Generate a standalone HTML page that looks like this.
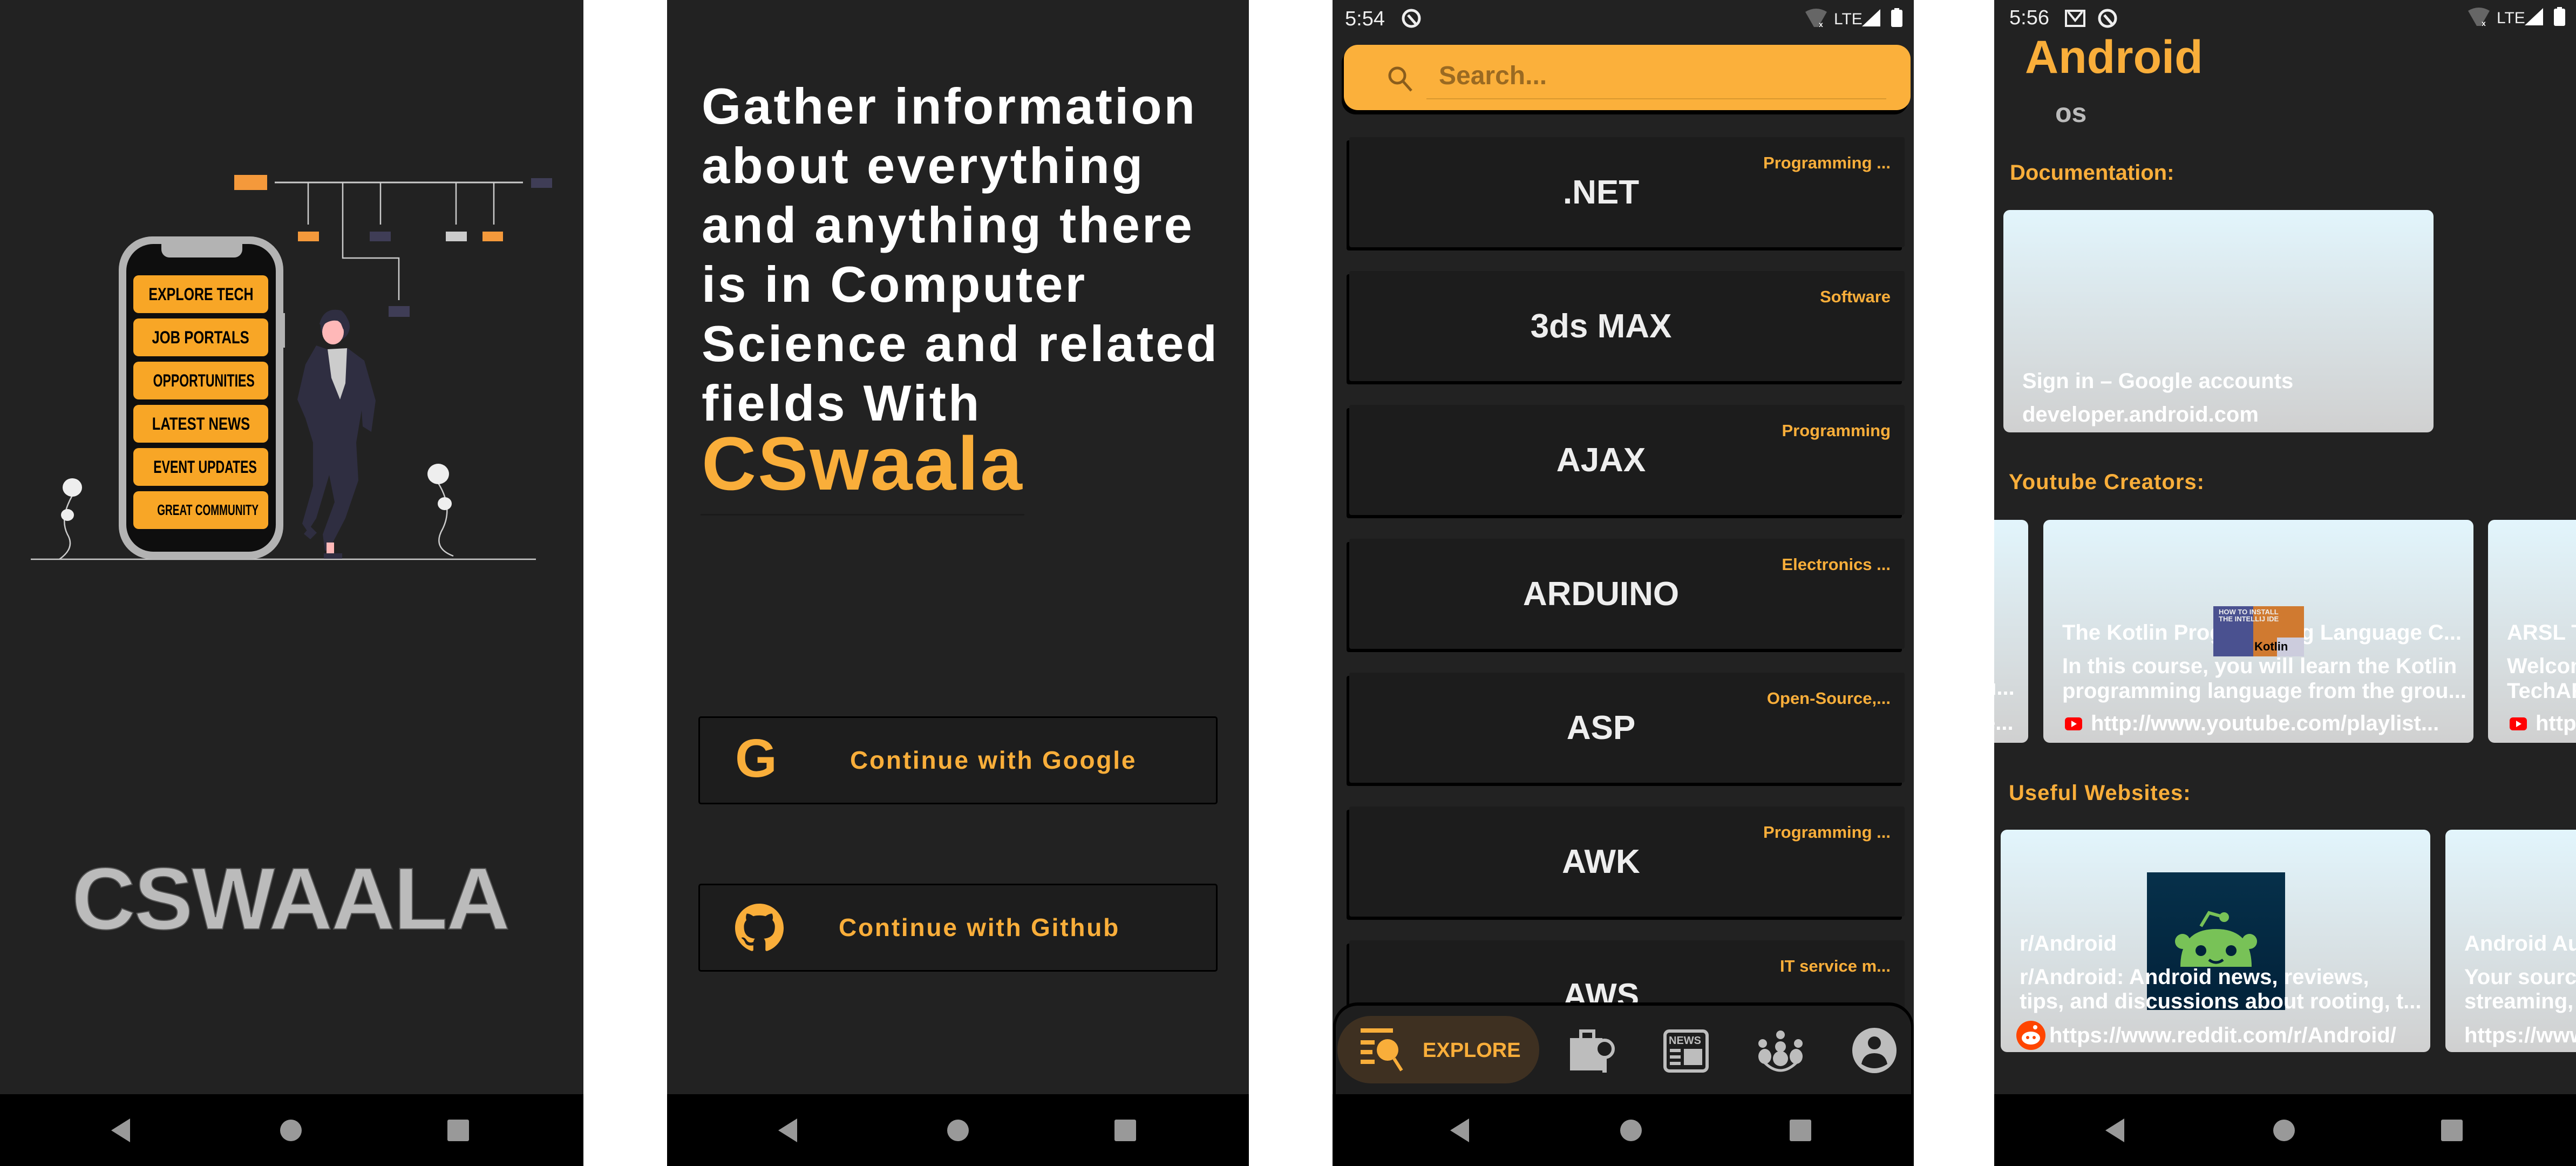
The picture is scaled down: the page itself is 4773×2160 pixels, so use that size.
<!DOCTYPE html>
<html><head><meta charset="utf-8">
<style>
*{margin:0;padding:0;box-sizing:border-box}
body{width:4773px;height:2160px;background:#fff;position:relative;overflow:hidden;font-family:"Liberation Sans",sans-serif}
.scr{position:absolute;top:0;height:2160px;background:#222;overflow:hidden}
.a{position:absolute;white-space:nowrap}
.nav{position:absolute;left:0;right:0;top:2027px;height:133px;background:#000}
.n{font-family:"Liberation Sans Narrow","Liberation Sans",sans-serif;font-weight:bold}
.card{position:absolute;left:31px;width:1029px;height:204px;background:#1c1c1c;box-shadow:-5px 6px 0 #000;border-radius:4px}
.card .t{position:absolute;left:0;right:96px;top:72px;text-align:center;color:#eee;font-size:62px;line-height:62px}
.card .c{position:absolute;right:26px;top:32px;color:#f9ae3a;font-size:31px;line-height:31px}
.g{background:linear-gradient(#e2f5fc,#d0d0d0);border-radius:12px;position:absolute;overflow:hidden}
.w{color:#fff;font-size:38px;line-height:38px}
.o{color:#f9ae3a}
.pb{position:absolute;left:247px;width:250px;height:70px;background:#f8a626;border-radius:10px;line-height:70px;text-align:center;color:#000;font-weight:bold;overflow:hidden;white-space:nowrap;font-size:32px}
.pb span{display:inline-block}
</style></head><body>

<!-- SCREEN 1 -->
<div class="scr" style="left:0;width:1081px">
<svg class="a" style="left:0;top:0" width="1081" height="1100">
<rect x="434" y="324" width="61" height="28" fill="#f4993b"/>
<line x1="509" y1="338" x2="969" y2="338" stroke="#ccc" stroke-width="3"/>
<rect x="984" y="330" width="39" height="18" fill="#3f3d56"/>
<g stroke="#ccc" stroke-width="2.5" fill="none">
<line x1="571" y1="338" x2="571" y2="416"/><line x1="705" y1="338" x2="705" y2="416"/>
<line x1="845" y1="338" x2="845" y2="416"/><line x1="915" y1="338" x2="915" y2="416"/>
<polyline points="635,338 635,478 739,478 739,556"/>
<line x1="57" y1="1036" x2="993" y2="1036"/>
<path d="M134 918 Q110 960 125 990 Q140 1015 110 1036"/>
<path d="M812 895 Q840 940 820 980 Q800 1015 840 1030"/>
</g>
<rect x="552" y="429" width="39" height="18" fill="#f4993b"/>
<rect x="685" y="429" width="39" height="18" fill="#3f3d56"/>
<rect x="826" y="429" width="39" height="18" fill="#ccc"/>
<rect x="894" y="429" width="38" height="18" fill="#f4993b"/>
<rect x="720" y="567" width="39" height="20" fill="#3f3d56"/>
<ellipse cx="134" cy="903" rx="18" ry="17" fill="#eee"/>
<ellipse cx="125" cy="954" rx="12" ry="11" fill="#eee"/>
<ellipse cx="812" cy="878" rx="20" ry="19" fill="#eee"/>
<ellipse cx="824" cy="933" rx="13" ry="12" fill="#eee"/>
<rect x="220" y="438" width="305" height="598" rx="62" fill="#b3b3b3"/>
<rect x="234" y="452" width="277" height="570" rx="50" fill="#0e0e0e"/>
<path d="M299 450 h150 v12 a15 15 0 0 1 -15 15 h-120 a15 15 0 0 1 -15 -15z" fill="#b3b3b3"/>
<rect x="524" y="580" width="4" height="64" fill="#b3b3b3"/>
<path d="M586 640 L606 647 L644 645 L675 668 L696 742 L688 800 L672 790 L670 760 L660 820 L664 890 L640 960 L614 1010 L614 1020 L602 1020 L598 990 L620 930 L610 880 L586 960 L570 985 L560 970 L580 900 L580 820 L566 775 L551 740 L566 675 Z" fill="#2f2e41"/>
<path d="M607 647 L643 645 L640 710 L630 740 L614 700 Z" fill="#ccc"/>
<circle cx="621" cy="605" r="27" fill="#2f2e41"/>
<ellipse cx="617" cy="615" rx="20" ry="23" fill="#ffb8b8"/>
<path d="M592 600 Q600 568 632 575 Q650 590 646 615 L636 610 L630 595 Q610 590 596 605 Z" fill="#2f2e41"/>
<rect x="605" y="1005" width="14" height="22" fill="#ffb8b8"/>
<path d="M600 1025 h34 v10 h-34 z" fill="#2f2e41"/>
<path d="M575 975 l12 12 l-12 12 l-12 -10 z" fill="#2f2e41"/>
</svg>
<div class="pb" style="top:510px"><span style="transform:scaleX(.78)">EXPLORE TECH</span></div>
<div class="pb" style="top:590px"><span style="transform:scaleX(.8)">JOB PORTALS</span></div>
<div class="pb" style="top:670px"><span style="transform:scaleX(.72)">OPPORTUNITIES</span></div>
<div class="pb" style="top:750px"><span style="transform:scaleX(.8)">LATEST NEWS</span></div>
<div class="pb" style="top:830px"><span style="transform:scaleX(.72)">EVENT UPDATES</span></div>
<div class="pb" style="top:910px;font-size:28px"><span style="transform:scaleX(.68)">GREAT COMMUNITY</span></div>
<div class="a" style="left:133px;top:1583px;font-size:163px;line-height:163px;font-weight:bold;color:#bbb;letter-spacing:-2px;-webkit-text-stroke:2px #555">CSWAALA</div>
<div class="nav"><svg width="1081" height="133">
<path d="M241 45 L206 67 L241 89 Z" fill="#999"/><ellipse cx="539" cy="67" rx="20" ry="20" fill="#999"/><rect x="829" y="47" width="40" height="40" rx="3" fill="#999"/></svg></div>
</div>

<!-- SCREEN 2 -->
<div class="scr" style="left:1236px;width:1078px">
<div class="a" style="left:64px;top:142px;font-size:94px;line-height:110px;font-weight:bold;color:#fff;letter-spacing:4px">Gather information<br>about everything<br>and anything there<br>is in Computer<br>Science and related<br>fields With</div>
<div class="a" style="left:64px;top:789px;font-size:140px;line-height:140px;font-weight:bold;color:#f9ae3a;letter-spacing:3px">CSwaala</div>
<div class="a" style="left:62px;top:952px;width:600px;height:3px;background:#1a1a1a"></div>
<div class="a" style="left:58px;top:1327px;width:962px;height:163px;background:#1d1d1d;border:3px solid #000;border-radius:5px"></div>
<div class="a" style="left:126px;top:1355px;font-size:100px;line-height:100px;font-weight:bold;color:#f9ae3a">G</div>
<div class="a" style="left:339px;top:1385px;font-size:46px;line-height:46px;font-weight:bold;color:#f9ae3a;letter-spacing:2.8px">Continue with Google</div>
<div class="a" style="left:58px;top:1637px;width:962px;height:163px;background:#1d1d1d;border:3px solid #000;border-radius:5px"></div>
<svg class="a" style="left:126px;top:1674px" width="90" height="90" viewBox="0 0 16 16"><path fill="#f9ae3a" d="M8 0C3.58 0 0 3.58 0 8c0 3.540 2.290 6.530 5.470 7.590.4.07.55-.17.55-.38 0-.19-.01-.82-.01-1.49-2.01.37-2.530-.49-2.690-.94-.09-.23-.48-.94-.82-1.13-.28-.15-.68-.52-.01-.53.63-.01 1.080.58 1.230.82.72 1.210 1.870.87 2.330.66.07-.52.28-.87.51-1.07-1.780-.2-3.640-.89-3.640-3.950 0-.87.31-1.590.82-2.150-.08-.2-.36-1.020.08-2.120 0 0 .67-.21 2.200.82.64-.18 1.320-.27 2-.27.68 0 1.360.09 2 .27 1.530-1.040 2.200-.82 2.200-.82.44 1.100.16 1.920.08 2.120.51.56.82 1.270.82 2.150 0 3.070-1.870 3.750-3.650 3.950.29.25.54.73.54 1.480 0 1.070-.01 1.930-.01 2.200 0 .21.15.46.55.38A8.013 8.013 0 0016 8c0-4.420-3.580-8-8-8z"/></svg>
<div class="a" style="left:318px;top:1695px;font-size:46px;line-height:46px;font-weight:bold;color:#f9ae3a;letter-spacing:2.8px">Continue with Github</div>
<div class="nav"><svg width="1078" height="133">
<path d="M241 45 L206 67 L241 89 Z" fill="#999"/><ellipse cx="539" cy="67" rx="20" ry="20" fill="#999"/><rect x="829" y="47" width="40" height="40" rx="3" fill="#999"/></svg></div>
</div>

<!-- SCREEN 3 -->
<div class="scr" style="left:2469px;width:1077px">
<div class="a" style="left:23px;top:16px;font-size:38px;line-height:38px;color:#eee">5:54</div>
<svg class="a" style="left:126px;top:14px" width="40" height="40" viewBox="0 0 40 40"><circle cx="20" cy="20" r="15" fill="none" stroke="#eee" stroke-width="5"/><path d="M14 14 L28 30" stroke="#eee" stroke-width="5"/></svg>
<svg class="a" style="left:876px;top:14px" width="200" height="40">
<path d="M0 8 Q20 -4 40 8 L24 36 L16 36 Z" fill="#666"/><text x="25" y="36" font-size="14" fill="#fff" font-weight="bold">x</text>
<text x="53" y="31" font-size="30" fill="#eee">LTE</text>
<path d="M105 35 L139 3 L139 35 Z" fill="#fff"/><rect x="159" y="4" width="21" height="32" rx="3" fill="#fff"/><rect x="165" y="1" width="9" height="4" fill="#fff"/></svg>
<div class="a" style="left:21px;top:83px;width:1050px;height:121px;background:#fbb03b;border-radius:26px;box-shadow:-4px 8px 0 #000"></div>
<svg class="a" style="left:100px;top:120px" width="52" height="52" viewBox="0 0 52 52"><circle cx="20" cy="20" r="14" fill="none" stroke="#8a5d1c" stroke-width="5"/><path d="M30 30 L46 48" stroke="#8a5d1c" stroke-width="5"/></svg>
<div class="a n" style="left:197px;top:117px;font-size:48px;line-height:48px;color:#9a6a22">Search...</div>
<div class="a" style="left:174px;top:182px;width:852px;height:2px;background:#d9982f"></div>
<div class="card n" style="top:254px"><div class="c">Programming ...</div><div class="t">.NET</div></div>
<div class="card n" style="top:502px"><div class="c">Software</div><div class="t">3ds MAX</div></div>
<div class="card n" style="top:750px"><div class="c">Programming</div><div class="t">AJAX</div></div>
<div class="card n" style="top:998px"><div class="c">Electronics ...</div><div class="t">ARDUINO</div></div>
<div class="card n" style="top:1246px"><div class="c">Open-Source,...</div><div class="t">ASP</div></div>
<div class="card n" style="top:1494px"><div class="c">Programming ...</div><div class="t">AWK</div></div>
<div class="card n" style="top:1742px"><div class="c">IT service m...</div><div class="t">AWS</div></div>
<div class="a" style="left:1px;top:1857px;width:1076px;height:175px;background:#1e1e1e;border-top:6px solid #000;border-left:5px solid #000;border-right:5px solid #000;border-radius:46px 46px 0 0"></div>
<div class="a" style="left:9px;top:1882px;width:374px;height:125px;background:#3e3021;border-radius:62px"></div>
<svg class="a" style="left:50px;top:1905px" width="90" height="80" viewBox="0 0 90 80"><g fill="#f9ae3a"><rect x="2" y="0" width="60" height="8"/><rect x="2" y="22" width="26" height="8"/><rect x="2" y="40" width="22" height="8"/><rect x="2" y="58" width="26" height="8"/><circle cx="52" cy="40" r="20"/></g><path d="M64 56 L78 78" stroke="#f9ae3a" stroke-width="6"/></svg>
<div class="a n" style="left:167px;top:1927px;font-size:38px;line-height:38px;color:#f9ae3a">EXPLORE</div>
<svg class="a" style="left:440px;top:1905px" width="85" height="85" viewBox="0 0 85 85"><rect x="0" y="18" width="60" height="60" fill="#bdbdbd"/><rect x="20" y="5" width="24" height="16" fill="none" stroke="#bdbdbd" stroke-width="6"/><circle cx="64" cy="38" r="16" fill="#1e1e1e" stroke="#bdbdbd" stroke-width="6"/><rect x="60" y="54" width="8" height="28" fill="#bdbdbd"/></svg>
<svg class="a" style="left:613px;top:1907px" width="84" height="80" viewBox="0 0 84 80"><rect x="3" y="3" width="78" height="74" rx="8" fill="none" stroke="#bdbdbd" stroke-width="6"/><text x="10" y="27" font-size="20" font-weight="bold" fill="#bdbdbd">NEWS</text><rect x="12" y="36" width="20" height="6" fill="#bdbdbd"/><rect x="12" y="48" width="20" height="6" fill="#bdbdbd"/><rect x="12" y="60" width="20" height="6" fill="#bdbdbd"/><rect x="38" y="36" width="34" height="30" fill="#bdbdbd"/></svg>
<svg class="a" style="left:787px;top:1907px" width="86" height="80" viewBox="0 0 86 80"><g fill="#bdbdbd"><circle cx="43" cy="10" r="8"/><circle cx="10" cy="26" r="8"/><circle cx="76" cy="26" r="8"/><circle cx="43" cy="32" r="10"/><ellipse cx="43" cy="54" rx="14" ry="14"/><ellipse cx="14" cy="50" rx="12" ry="14"/><ellipse cx="72" cy="50" rx="12" ry="14"/></g><path d="M12 60 Q43 92 74 60" fill="none" stroke="#bdbdbd" stroke-width="5"/></svg>
<svg class="a" style="left:962px;top:1903px" width="84" height="86" viewBox="0 0 84 86"><ellipse cx="42" cy="43" rx="41" ry="42" fill="#bdbdbd"/><circle cx="42" cy="29" r="12" fill="#1e1e1e"/><path d="M18 68 Q22 48 42 48 Q62 48 66 68 Q42 84 18 68Z" fill="#1e1e1e"/></svg>
<div class="nav"><svg width="1077" height="133">
<path d="M253 45 L218 67 L253 89 Z" fill="#999"/><ellipse cx="553" cy="67" rx="20" ry="20" fill="#999"/><rect x="847" y="47" width="40" height="40" rx="3" fill="#999"/></svg></div>
</div>

<!-- SCREEN 4 -->
<div class="scr" style="left:3695px;width:1078px">
<div class="a" style="left:28px;top:14px;font-size:38px;line-height:38px;color:#eee">5:56</div>
<svg class="a" style="left:130px;top:14px" width="110" height="40"><rect x="3" y="6" width="34" height="28" fill="none" stroke="#eee" stroke-width="4"/><path d="M7 8 L20 24 L33 8" fill="none" stroke="#eee" stroke-width="4"/><circle cx="80" cy="20" r="15" fill="none" stroke="#eee" stroke-width="5"/><path d="M74 14 L88 30" stroke="#eee" stroke-width="5"/></svg>
<svg class="a" style="left:878px;top:12px" width="200" height="40">
<path d="M0 8 Q20 -4 40 8 L24 36 L16 36 Z" fill="#666"/><text x="25" y="36" font-size="14" fill="#fff" font-weight="bold">x</text>
<text x="53" y="31" font-size="30" fill="#eee">LTE</text>
<path d="M105 35 L139 3 L139 35 Z" fill="#fff"/><rect x="159" y="4" width="21" height="32" rx="3" fill="#fff"/><rect x="165" y="1" width="9" height="4" fill="#fff"/></svg>
<div class="a n" style="left:57px;top:62px;font-size:86px;line-height:88px;color:#f9ae3a">Android</div>
<div class="a" style="left:113px;top:184px;font-size:50px;line-height:50px;font-weight:bold;color:#bbb">os</div>
<div class="a n o" style="left:29px;top:300px;font-size:40px;line-height:40px">Documentation:</div>
<div class="g" style="left:17px;top:389px;width:797px;height:412px">
<div class="a n w" style="left:35px;top:298px;font-size:40px">Sign in – Google accounts</div>
<div class="a n w" style="left:35px;top:360px;font-size:40px">developer.android.com</div></div>
<div class="a o" style="left:27px;top:873px;font-size:40px;line-height:40px;font-weight:bold;letter-spacing:1px">Youtube Creators:</div>
<div class="g" style="left:-20px;top:963px;width:83px;height:413px">
<div class="a n w" style="left:0;top:292px;font-size:40px">u...</div><div class="a n w" style="left:0;top:357px;font-size:40px">e...</div></div>
<div class="g" style="left:91px;top:963px;width:797px;height:413px">
<div class="a n w" style="left:35px;top:190px;font-size:40px">The Kotlin Programming Language C...</div>
<div class="a n w" style="left:35px;top:252px;font-size:40px">In this course, you will learn the Kotlin</div>
<div class="a n w" style="left:35px;top:298px;font-size:40px">programming language from the grou...</div>
<svg class="a" style="left:40px;top:366px" width="32" height="24"><rect width="32" height="24" rx="6" fill="#f00"/><path d="M12 6 L22 12 L12 18Z" fill="#fff"/></svg>
<div class="a n w" style="left:88px;top:358px;font-size:40px">http://www.youtube.com/playlist...</div>
<div class="a" style="left:315px;top:160px;width:168px;height:93px;background:linear-gradient(90deg,#4a5190 44%,#d07a30 44%)"><div class="a" style="left:118px;top:58px;width:50px;height:35px;background:#ccd"></div><div class="a n" style="left:10px;top:4px;font-size:13px;line-height:13px;color:#eee">HOW TO INSTALL<br>THE INTELLIJ IDE</div><div class="a n" style="left:76px;top:64px;font-size:22px;line-height:22px;color:#000">Kotlin</div></div>
</div>
<div class="g" style="left:915px;top:963px;width:300px;height:413px">
<div class="a n w" style="left:35px;top:190px;font-size:40px">ARSL Tech</div>
<div class="a n w" style="left:35px;top:252px;font-size:40px">Welcome</div>
<div class="a n w" style="left:35px;top:298px;font-size:40px">TechAR</div>
<svg class="a" style="left:40px;top:366px" width="32" height="24"><rect width="32" height="24" rx="6" fill="#f00"/><path d="M12 6 L22 12 L12 18Z" fill="#fff"/></svg>
<div class="a n w" style="left:88px;top:358px;font-size:40px">http</div></div>
<div class="a o" style="left:27px;top:1449px;font-size:40px;line-height:40px;font-weight:bold;letter-spacing:1px">Useful Websites:</div>
<div class="g" style="left:12px;top:1537px;width:796px;height:412px">
<div class="a" style="left:271px;top:79px;width:256px;height:255px;background:linear-gradient(#06304a,#02223a)">
<svg width="256" height="255"><path d="M100 100 L115 75 L140 82" fill="none" stroke="#78c257" stroke-width="6"/><circle cx="143" cy="83" r="9" fill="#78c257"/><path d="M62 175 Q62 105 128 105 Q194 105 194 175 Z" fill="#78c257"/><circle cx="66" cy="128" r="14" fill="#78c257"/><circle cx="190" cy="128" r="14" fill="#78c257"/><circle cx="100" cy="145" r="10" fill="#02223a"/><circle cx="156" cy="145" r="10" fill="#02223a"/><path d="M115 162 Q128 172 141 162" fill="none" stroke="#02223a" stroke-width="5"/></svg></div>
<div class="a n w" style="left:35px;top:192px;font-size:40px">r/Android</div>
<div class="a n w" style="left:35px;top:254px;font-size:40px">r/Android: Android news, reviews,</div>
<div class="a n w" style="left:35px;top:299px;font-size:40px">tips, and discussions about rooting, t...</div>
<svg class="a" style="left:28px;top:354px" width="56" height="54"><circle cx="28" cy="27" r="27" fill="#ff4500"/><ellipse cx="28" cy="32" rx="17" ry="12" fill="#fff"/><circle cx="36" cy="12" r="4" fill="#fff"/><circle cx="22" cy="31" r="3" fill="#ff4500"/><circle cx="34" cy="31" r="3" fill="#ff4500"/></svg>
<div class="a n w" style="left:90px;top:362px;font-size:40px">https://www.reddit.com/r/Android/</div></div>
<div class="g" style="left:836px;top:1537px;width:300px;height:412px">
<div class="a n w" style="left:35px;top:192px;font-size:40px">Android Authority</div>
<div class="a n w" style="left:35px;top:254px;font-size:40px">Your source</div>
<div class="a n w" style="left:35px;top:299px;font-size:40px">streaming,</div>
<div class="a n w" style="left:35px;top:362px;font-size:40px">https://www</div></div>
<div class="nav"><svg width="1078" height="133">
<path d="M241 45 L206 67 L241 89 Z" fill="#999"/><ellipse cx="537" cy="67" rx="20" ry="20" fill="#999"/><rect x="828" y="47" width="40" height="40" rx="3" fill="#999"/></svg></div>
</div>
</body></html>
